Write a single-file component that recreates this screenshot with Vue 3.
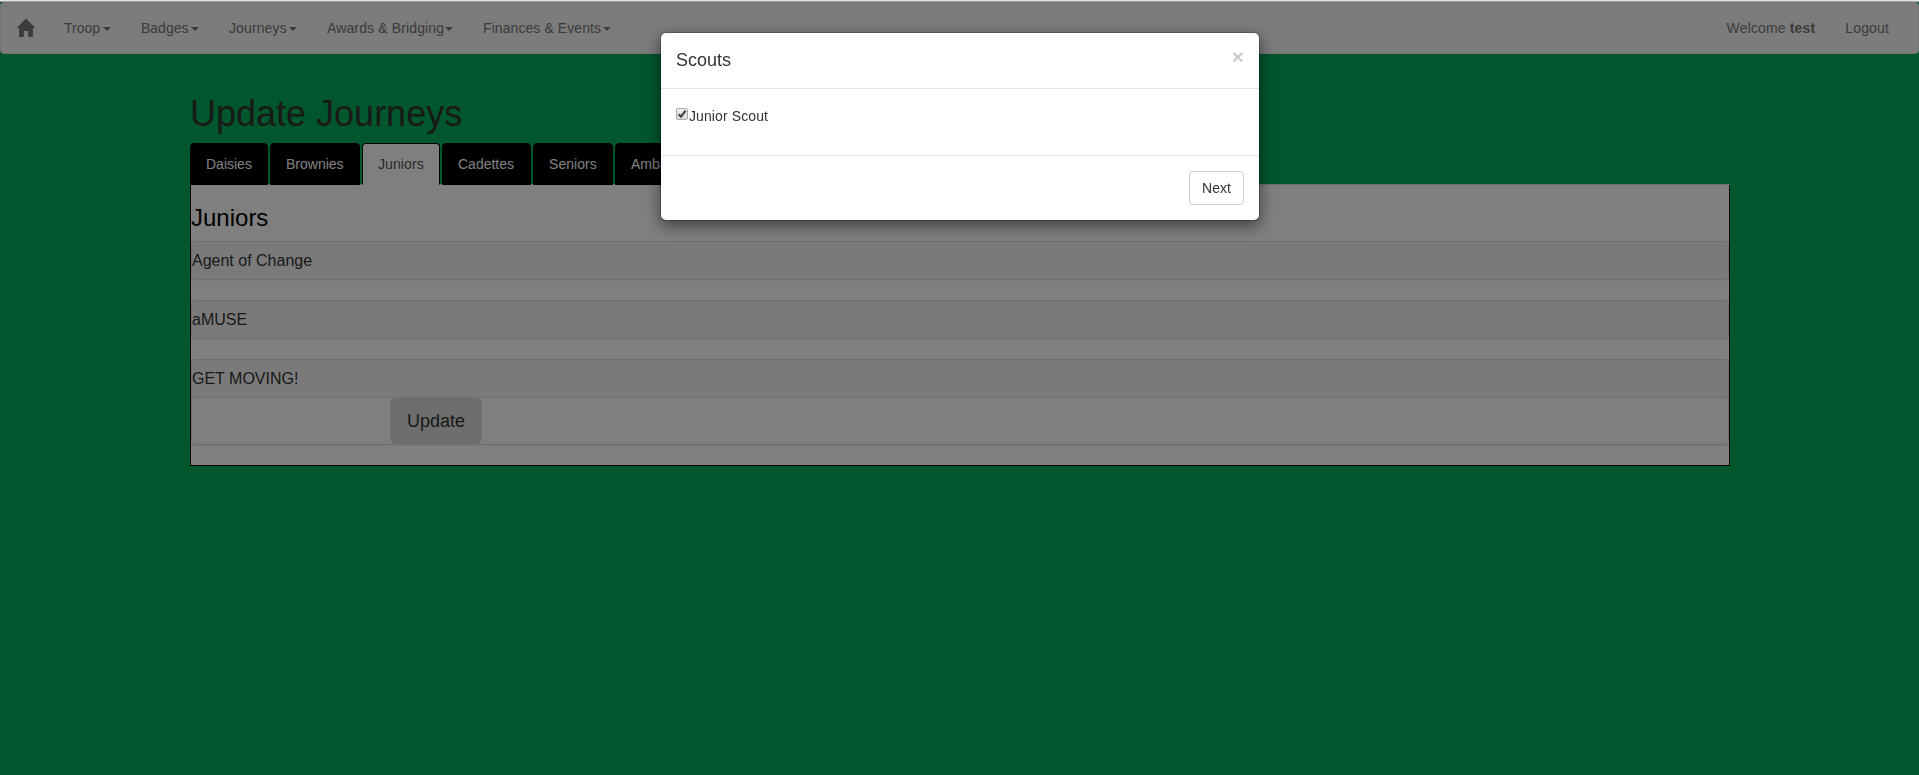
<script setup>
const menu = [
  { label: 'Troop', id: 'troop' },
  { label: 'Badges', id: 'badges' },
  { label: 'Journeys', id: 'journeys' },
  { label: 'Awards & Bridging', id: 'awards' },
  { label: 'Finances & Events', id: 'finances' },
]
const tabs = [
  { label: 'Daisies', id: 'daisies' },
  { label: 'Brownies', id: 'brownies' },
  { label: 'Juniors', id: 'juniors' },
  { label: 'Cadettes', id: 'cadettes' },
  { label: 'Seniors', id: 'seniors' },
  { label: 'Ambassadors', id: 'ambassadors' },
]
const active = 'juniors'
const journeys = ['Agent of Change', 'aMUSE', 'GET MOVING!']
</script>

<template>
  <div class="page">
    <nav class="navbar">
      <a class="brand">
        <svg width="20" height="20" viewBox="0 0 20 20">
          <path d="M10 0.6 L19.4 10 H16.9 V19 H12.2 V13 H7.8 V19 H3.1 V10 H0.6 Z" />
        </svg>
      </a>
      <a v-for="m in menu" :key="m.id" class="nav-link dropdown" :class="m.id"><span>{{ m.label }}</span><i class="caret"></i></a>
      <span class="spacer"></span>
      <a class="nav-link account">Welcome <b>test</b></a>
      <a class="nav-link account logout">Logout</a>
    </nav>

    <main class="container">
      <h1>Update Journeys</h1>
      <div class="tabs">
        <a v-for="t in tabs" :key="t.id" class="tab" :class="['tab-' + t.id, { active: t.id === active }]">{{ t.label }}</a>
      </div>
      <section class="content">
        <h3>Juniors</h3>
        <div v-for="(j, i) in journeys" :key="j" class="panel">
          <div class="heading">{{ j }}</div>
          <div v-if="i === 2" class="panel-body">
            <button class="update">Update</button>
          </div>
        </div>
      </section>
    </main>

    <div class="backdrop">
      <div class="modal">
        <header>
          <h4>Scouts</h4>
          <span class="close">×</span>
        </header>
        <div class="modal-body">
          <span class="check">
            <svg width="12" height="12" viewBox="0 0 12 12"><path d="M2.6 6.2 L5 8.6 L9.6 2.6" /></svg>
          </span>
          <span class="name">Junior Scout</span>
        </div>
        <footer><button class="next">Next</button></footer>
      </div>
    </div>
  </div>
</template>

<style>
body {
  margin: 0;
  background: #00ae5a;
  overflow: hidden;
}
</style>

<style scoped>
* {
  box-sizing: border-box;
}
.page {
  height: 775px;
  border-top: 1px solid #e3e5e5;
  padding-top: 1px;
  background: linear-gradient(#a3a6a5 1px, transparent 1px);
  font: 14px/20px "Liberation Sans", Arial, sans-serif;
  color: #333;
}
.navbar {
  display: flex;
  height: 52px;
  border: 1px solid #e7e7e7;
  border-radius: 4px;
  background: #f8f8f8;
  color: #777;
}
.brand {
  padding: 15px 13px 15px 15px;
  width: 48px;
}
.brand svg {
  display: block;
  fill: #777;
}
.nav-link {
  padding: 15px;
  white-space: pre;
}
.dropdown {
  display: flex;
  justify-content: space-between;
}
.troop {
  width: 77px;
}
.badges {
  width: 88px;
}
.journeys {
  width: 98px;
  letter-spacing: 0.12px;
}
.awards {
  width: 156px;
  letter-spacing: 0.13px;
}
.finances {
  width: 158px;
  letter-spacing: 0.08px;
}
.account {
  letter-spacing: 0.15px;
}
.logout {
  margin-right: 14px;
}
.caret {
  margin-top: 9px;
  height: 0;
  border-top: 4px solid #777;
  border-left: 4px solid transparent;
  border-right: 4px solid transparent;
}
.spacer {
  flex: 1;
}
.container {
  width: 1540px;
  margin: 20px 0 0 190px;
  padding-top: 20px;
}
h1 {
  margin: 0 0 10px;
  font-size: 36px;
  font-weight: 500;
  line-height: 39px;
}
.tabs {
  display: flex;
  gap: 2px;
  height: 42px;
  border-bottom: 1px solid #ddd;
}
.tab {
  height: 42px;
  padding: 10px 15px;
  border: 1px solid #000;
  border-radius: 4px 4px 0 0;
  background: #000;
  color: #fff;
}
.tab-daisies {
  width: 78px;
}
.tab-brownies {
  width: 90px;
}
.tab-juniors {
  width: 78px;
  letter-spacing: 0.1px;
}
.tab-cadettes {
  width: 89px;
}
.tab-seniors {
  width: 80px;
  letter-spacing: 0.06px;
}
.tab.active {
  background: #fff;
  border-bottom-color: transparent;
  color: #555;
}
.content {
  padding: 20px 0 0;
  border: 1px solid #000;
  border-top: 0;
  background: #fff;
}
h3 {
  margin: 0 0 10px;
  color: #000;
  font-size: 24px;
  font-weight: 500;
  line-height: 26px;
}
.panel {
  margin-bottom: 20px;
  border: 1px solid #ddd;
  border-radius: 4px;
  box-shadow: 0 1px 1px rgba(0, 0, 0, 0.05);
}
.heading {
  padding: 10px 0;
  border-radius: 3px;
  background: #f5f5f5;
  font-size: 16px;
  line-height: 17px;
}
.panel-body {
  display: flex;
  height: 47px;
  border-top: 1px solid #ddd;
  padding-left: 198px;
}
.update {
  width: 92px;
  height: 46px;
  padding: 0;
  border: 1px solid #dcdcdc;
  border-radius: 6px;
  background: #dcdcdc;
  color: #333;
  font: 18px/24px "Liberation Sans", Arial, sans-serif;
}
.backdrop {
  position: fixed;
  inset: 2px 0 0;
  background: rgba(0, 0, 0, 0.5);
}
.modal {
  width: 600px;
  margin: 30px 0 0 660px;
  border: 1px solid rgba(0, 0, 0, 0.2);
  border-radius: 6px;
  background: #fff;
  background-clip: padding-box;
  box-shadow: 0 5px 15px rgba(0, 0, 0, 0.5);
}
header {
  display: flex;
  justify-content: space-between;
  height: 56px;
  padding: 15px;
  border-bottom: 1px solid #e5e5e5;
}
h4 {
  margin: 0;
  font-size: 18px;
  font-weight: 500;
  line-height: 25px;
}
.close {
  margin-top: -2px;
  color: #ccc;
  font-size: 21px;
  font-weight: 700;
  line-height: 21px;
}
.modal-body {
  display: flex;
  height: 66px;
  padding: 17px 15px;
}
.check {
  width: 12px;
  height: 12px;
  margin: 2px 1px 0 0;
  border: 1px solid #aaa;
  border-radius: 2px;
  background: linear-gradient(#eee, #ddd);
}
.check svg {
  display: block;
  margin: -1px;
  fill: none;
  stroke: #444;
  stroke-width: 2.2;
}
.name {
  letter-spacing: 0.1px;
}
footer {
  display: flex;
  justify-content: flex-end;
  padding: 15px;
  border-top: 1px solid #e5e5e5;
}
.next {
  width: 55px;
  height: 34px;
  padding: 0;
  border: 1px solid #ccc;
  border-radius: 4px;
  background: #fff;
  color: #333;
  font: 14px/20px "Liberation Sans", Arial, sans-serif;
}
</style>
